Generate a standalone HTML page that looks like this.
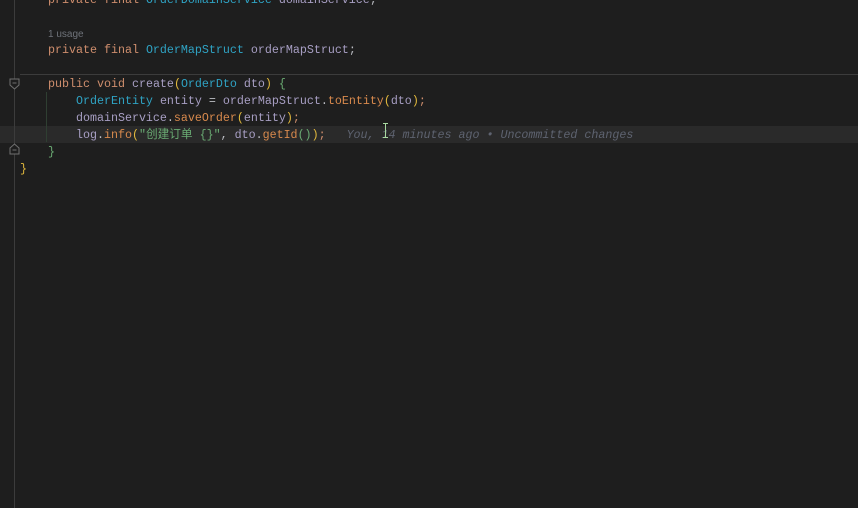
<!DOCTYPE html><html><head><style>
body{margin:0;width:858px;height:508px;background:#1e1e1e;overflow:hidden;position:relative;font-family:"Liberation Mono","Noto Sans CJK SC",monospace;font-size:11.67px;}
.l{position:absolute;left:48px;height:17px;line-height:17px;white-space:pre;color:#bcbec4}
.k{color:#cf8e6d}.c{color:#2fa3c4}.f{color:#a89fc4}.m{color:#d98a4d}.s{color:#6aab73}.g{color:#6f737a}.y{color:#e2b93d}
</style></head><body>
<div style="position:absolute;left:0;top:126px;width:858px;height:17px;background:#2a2a2a"></div>
<div style="position:absolute;left:14px;top:0;width:1px;height:508px;background:#3c3c3c"></div>
<div style="position:absolute;left:20px;top:74px;width:838px;height:1px;background:#3c3c3c"></div>
<div style="position:absolute;left:46px;top:92px;width:1px;height:50px;background:#2f3f32"></div>
<svg style="position:absolute;left:9px;top:78px" width="11" height="12"><path d="M1 1h9v6l-4.5 4L1 7z" fill="#1e1e1e" stroke="#707070"/><path d="M3.5 5h4" stroke="#707070"/></svg>
<svg style="position:absolute;left:9px;top:143px" width="11" height="12"><path d="M1 11h9V5L5.5 1 1 5z" fill="#1e1e1e" stroke="#707070"/><path d="M3.5 7h4" stroke="#707070"/></svg>
<div class="l" style="top:-8px"><span class="k">private final </span><span class="c">OrderDomainService </span><span class="f">domainService</span>;</div>
<div class="l g" style="top:26px;font-family:'Liberation Sans',sans-serif;font-size:10px">1 usage</div>
<div class="l" style="top:42px"><span class="k">private final </span><span class="c">OrderMapStruct </span><span class="f">orderMapStruct</span>;</div>
<div class="l" style="top:76px"><span class="k">public void </span><span class="f">create</span><span class="y">(</span><span class="c">OrderDto </span><span class="f">dto</span><span class="y">) </span><span class="s">{</span></div>
<div class="l" style="top:93px">    <span class="c">OrderEntity </span><span class="f">entity </span>= <span class="f">orderMapStruct</span>.<span class="m">toEntity</span><span class="y">(</span><span class="f">dto</span><span class="y">)</span><span class="k">;</span></div>
<div class="l" style="top:110px">    <span class="f">domainService</span>.<span class="m">saveOrder</span><span class="y">(</span><span class="f">entity</span><span class="y">)</span><span class="k">;</span></div>
<div class="l" style="top:127px">    <span class="f">log</span>.<span class="m">info</span><span class="y">(</span><span class="s">"创建订单 {}"</span>, <span class="f">dto</span>.<span class="m">getId</span><span class="s">()</span><span class="y">)</span><span class="k">;</span>   <i class="g" style="color:#5e6370">You, 14 minutes ago • Uncommitted changes</i></div>
<div class="l s" style="top:144px">}</div>
<div class="l y" style="top:161px;left:20px">}</div>
<div style="position:absolute;left:383px;top:123px;width:5px;height:15px;border-top:1px solid #a8d8a0;border-bottom:1px solid #a8d8a0;box-sizing:border-box"><div style="margin-left:2px;width:1px;height:13px;background:#a8d8a0"></div></div>
</body></html>
